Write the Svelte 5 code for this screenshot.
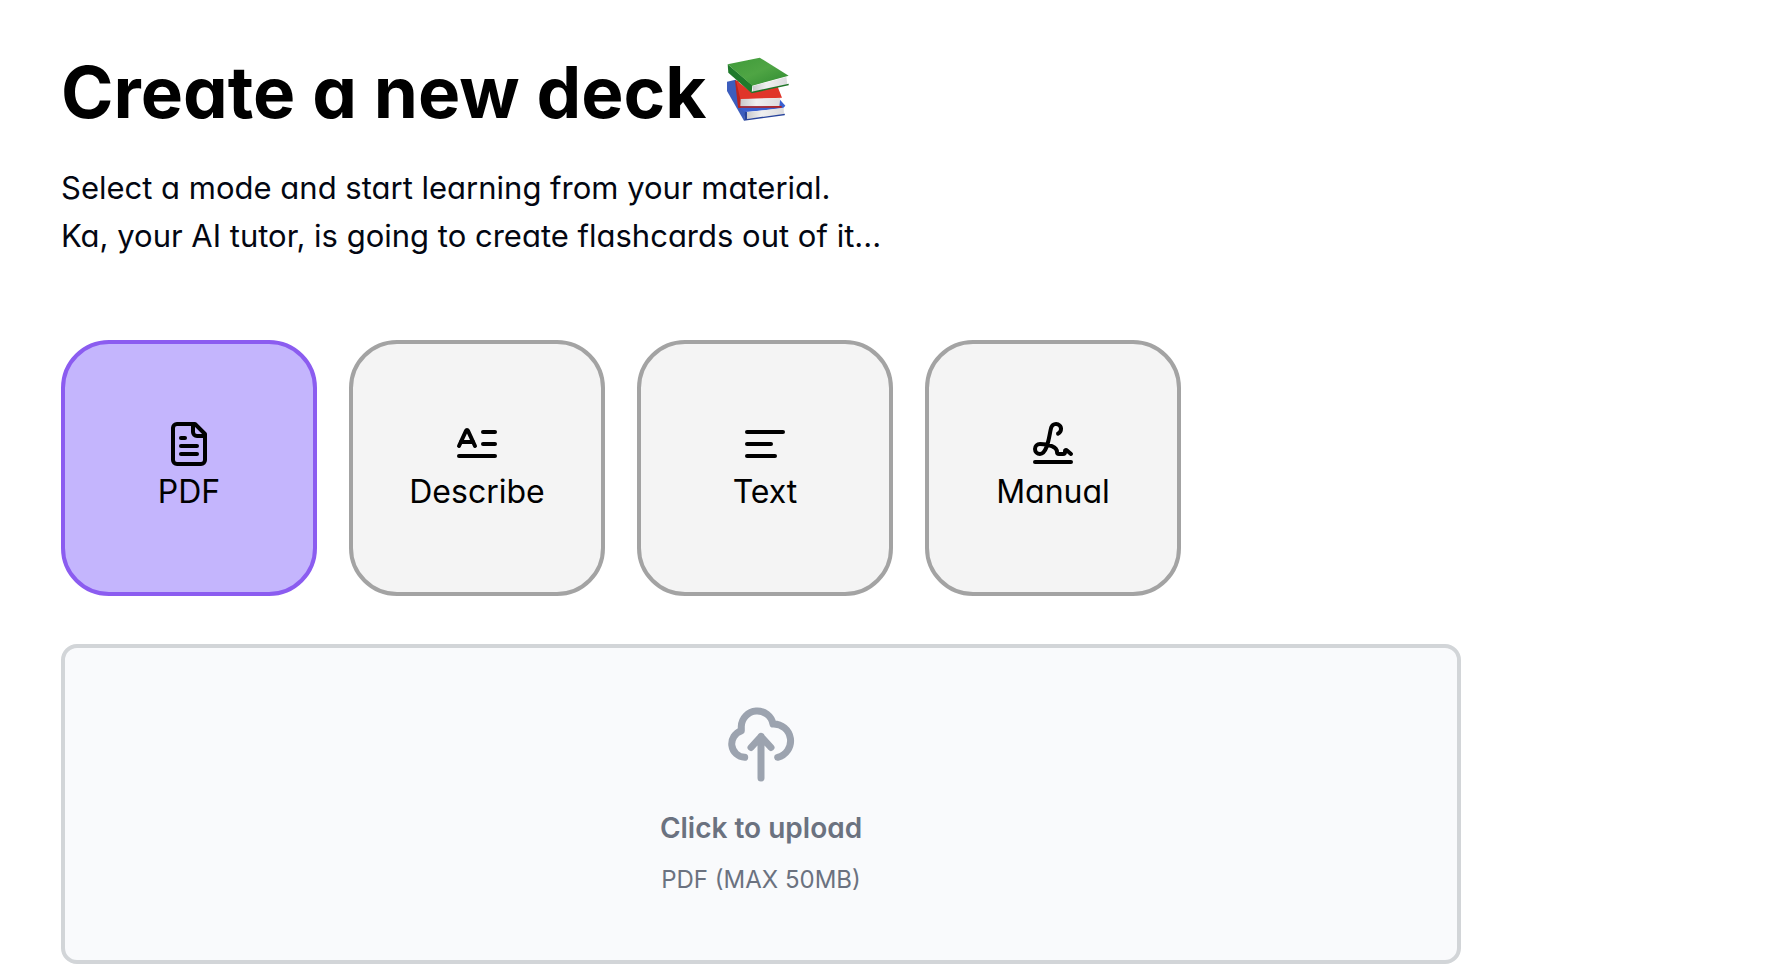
<script>
  const modes = [
    {
      name: "pdf",
      label: "PDF",
      paths: [
        "M15 2H6a2 2 0 0 0-2 2v16a2 2 0 0 0 2 2h12a2 2 0 0 0 2-2V7Z",
        "M14 2v4a2 2 0 0 0 2 2h4",
        "M10 9H8",
        "M16 13H8",
        "M16 17H8",
      ],
    },
    {
      name: "describe",
      label: "Describe",
      paths: [
        "M15 12h6",
        "M15 6h6",
        "m3 13 3.553-7.724a.5.5 0 0 1 .894 0L11 13",
        "M3 18h18",
        "M4 11h6",
      ],
    },
    {
      name: "text",
      label: "Text",
      paths: ["M15 12H3", "M17 18H3", "M21 6H3"],
    },
    {
      name: "manual",
      label: "Manual",
      paths: [
        "m21 17-2.156-1.868A.5.5 0 0 0 18 15.5v.5a1 1 0 0 1-1 1h-2a1 1 0 0 1-1-1c0-2.545-3.991-3.97-8.5-4a1 1 0 0 0 0 5c4.153 0 4.745-11.295 5.708-13.5a2.5 2.5 0 1 1 3.31 3.284",
        "M3 21h18",
      ],
    },
  ];

  let mode = $state("pdf");
</script>

<main>
  <h1>
    Create a new deck
    <svg class="books" viewBox="83 34 192 196" role="img" aria-label="Books">
      <defs>
        <linearGradient id="green" x1="0" y1="0" x2="1" y2="1">
          <stop offset="0" stop-color="#3f9a3a" />
          <stop offset="0.5" stop-color="#4fa544" />
          <stop offset="1" stop-color="#2f8a31" />
        </linearGradient>
        <linearGradient id="pages" x1="0" y1="0" x2="1" y2="0">
          <stop offset="0" stop-color="#c9c9cb" />
          <stop offset="0.4" stop-color="#f0f0f0" />
          <stop offset="1" stop-color="#dcdcde" />
        </linearGradient>
      </defs>
      <!-- blue -->
      <path d="M86 110 112 104 142 198 137 227 86 138Z" fill="#3c5dbd" />
      <path d="M118 186 245 164 261 182 254 190 141 201Z" fill="#3a5fd0" />
      <path d="M145 202 256 188 257 208 146 222Z" fill="url(#pages)" />
      <path d="M140 200 146 201 146 222 260 206 259 211 137 227Z" fill="#27439b" />
      <!-- red -->
      <path d="M110 106 120 108 130 160 128 188 119 187Z" fill="#b9261f" />
      <path d="M113 106 160 142 238 125 251 158 126 163Z" fill="#e03529" />
      <path d="M127 162 246 159 243 184 126 184Z" fill="url(#pages)" />
      <path d="M119 184 250 183 250 188 119 188Z" fill="#b82019" />
      <!-- green -->
      <path d="M88 58 162 121 160 145 90 83Z" fill="#1f7a2b" />
      <path d="M88 58 184 38 271 92 162 122Z" fill="url(#green)" />
      <path d="M164 123 264 96 267 118 163 142Z" fill="url(#pages)" />
      <path d="M160 140 271 116 271 121 160 145Z" fill="#1f7427" />
    </svg>
  </h1>

  <p class="intro">
    Select a mode and start learning from your material.<br />
    Ka, your AI tutor, is going to create flashcards out of it...
  </p>

  <fieldset class="modes" aria-label="Mode">
    {#each modes as { name, label, paths } (name)}
      <label class="mode" for={`mode-${name}`}>
        <input class="sr-only" type="radio" id={`mode-${name}`} name="mode" bind:group={mode} value={name} />
        <svg class="icon" viewBox="0 0 24 24" aria-hidden="true">
          {#each paths as d}
            <path {d} />
          {/each}
        </svg>
        <span>{label}</span>
      </label>
    {/each}
  </fieldset>

  <label class="dropzone" for="deck-file">
    <svg class="cloud" viewBox="0 0 80 80" aria-hidden="true">
      <path d="M23.7 53.3A13.5 13.5 0 0 1 20.3 26.9V22.3A16 16 0 0 1 52 20A16.9 16.9 0 0 1 56.7 53.3" />
      <path d="M40 74V32.5M30 43.5 40 32.5 50 43.5" />
    </svg>
    <span class="action">Click to upload</span>
    <span class="hint">PDF (MAX 50MB)</span>
    <input class="sr-only" type="file" id="deck-file" accept="application/pdf" />
  </label>
</main>

<style>
  :global(body) {
    margin: 0;
    background: #fff;
  }

  main {
    max-width: 1400px;
    padding: 56px 61px 16px;
    font-family: Inter, "Liberation Sans", sans-serif;
    font-feature-settings: "cv11";
    color: #000;
  }

  h1 {
    display: flex;
    align-items: flex-start;
    gap: 20px;
    margin: 0;
    font-size: 71px;
    line-height: 72px;
    font-weight: 700;
  }

  .books {
    width: 64px;
    height: 66px;
  }

  .intro {
    margin: 36px 0 80px;
    font-size: 31px;
    line-height: 48px;
    color: #030712;
  }

  .modes {
    display: flex;
    flex-wrap: wrap;
    gap: 32px;
    margin: 0 0 48px;
    padding: 0;
    border: 0;
  }

  .mode {
    position: relative;
    box-sizing: border-box;
    width: 256px;
    height: 256px;
    display: flex;
    flex-direction: column;
    align-items: center;
    justify-content: center;
    border: 4px solid #a3a3a3;
    border-radius: 48px;
    background: #f4f4f4;
    font-size: 32px;
    line-height: 48px;
    cursor: pointer;
  }

  .mode:has(input:checked) {
    border-color: #8b5cf0;
    background: #c4b5fd;
  }

  .mode:has(input:focus-visible),
  .dropzone:has(input:focus-visible) {
    outline: 4px solid #ddd6fe;
  }

  .icon {
    width: 48px;
    height: 48px;
    fill: none;
    stroke: #000;
    stroke-width: 2;
    stroke-linecap: round;
    stroke-linejoin: round;
  }

  .dropzone {
    position: relative;
    box-sizing: border-box;
    min-height: 320px;
    display: flex;
    flex-direction: column;
    align-items: center;
    padding: 56px 40px;
    border: 4px solid #d2d5d8;
    border-radius: 16px;
    background: #f9fafc;
    color: #6b7280;
    cursor: pointer;
  }

  .cloud {
    width: 80px;
    height: 80px;
    margin-bottom: 24px;
    fill: none;
    stroke: #9ca3af;
    stroke-width: 7;
    stroke-linecap: round;
    stroke-linejoin: round;
  }

  .action {
    margin-bottom: 16px;
    font-size: 28px;
    line-height: 40px;
    font-weight: 600;
  }

  .hint {
    font-size: 24px;
    line-height: 32px;
  }

  .sr-only {
    position: absolute;
    width: 1px;
    height: 1px;
    margin: 0;
    overflow: hidden;
    opacity: 0;
  }
</style>
